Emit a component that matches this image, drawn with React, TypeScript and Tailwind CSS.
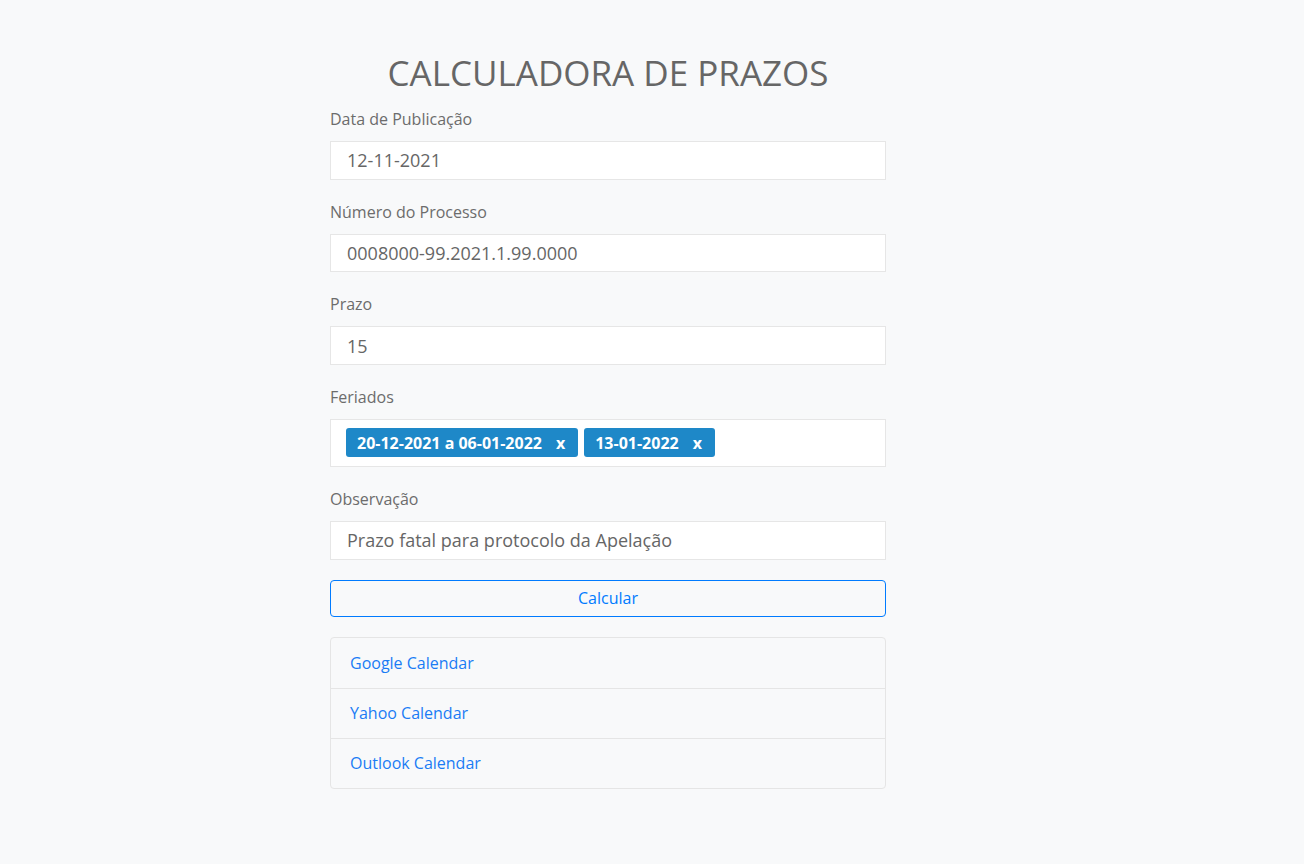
const fields = [
  { label: "Data de Publicação", value: "12-11-2021" },
  { label: "Número do Processo", value: "0008000-99.2021.1.99.0000" },
  { label: "Prazo", value: "15" },
];

const tags = ["20-12-2021 a 06-01-2022", "13-01-2022"];

const calendars = ["Google Calendar", "Yahoo Calendar", "Outlook Calendar"];

function Field({ label, value }: { label: string; value: string }) {
  return (
    <div className="mb-5">
      <label className="block text-[16px] leading-6 text-[#6c6c6c] mb-[10px]">{label}</label>
      <input
        readOnly
        value={value}
        className="block w-full h-[38.67px] bg-white border border-[#e6e6e6] px-4 text-[18px] text-[#666] outline-none"
      />
    </div>
  );
}

export default function App() {
  return (
    <div
      className="min-h-[864px] bg-[#f8f9fa] pt-[48px]"
      style={{ fontFamily: '"Open Sans", sans-serif' }}
    >
      <div className="w-[556px] ml-[330px]">
        <h1 className="text-center text-[35px] leading-[50px] font-normal text-[#666] mb-[9px]">
          CALCULADORA DE PRAZOS
        </h1>

        {fields.map((f) => (
          <Field key={f.label} {...f} />
        ))}

        <div className="mb-5">
          <label className="block text-[16px] leading-6 text-[#6c6c6c] mb-[10px]">Feriados</label>
          <div className="flex items-center gap-[6px] h-[48px] bg-white border border-[#e6e6e6] px-[15px]">
            {tags.map((t) => (
              <span
                key={t}
                className="flex items-center h-[29px] rounded-[3px] bg-[#1e88c8] text-white text-[16px] font-bold pl-[11px] pr-[13px]"
              >
                {t}
                <span className="ml-[14px]">x</span>
              </span>
            ))}
          </div>
        </div>

        <Field label="Observação" value="Prazo fatal para protocolo da Apelação" />

        <button className="block w-full h-[37px] rounded-[4px] border border-[#007bff] text-[#007bff] text-[16px] bg-transparent">
          Calcular
        </button>

        <div className="mt-5 border border-[#e5e5e5] rounded-[4px]">
          {calendars.map((c, i) => (
            <div
              key={c}
              className={`h-[50px] flex items-center px-[19px] text-[16px] text-[#1a7cf5] ${i > 0 ? "border-t border-[#e5e5e5]" : ""}`}
            >
              {c}
            </div>
          ))}
        </div>
      </div>
    </div>
  );
}
